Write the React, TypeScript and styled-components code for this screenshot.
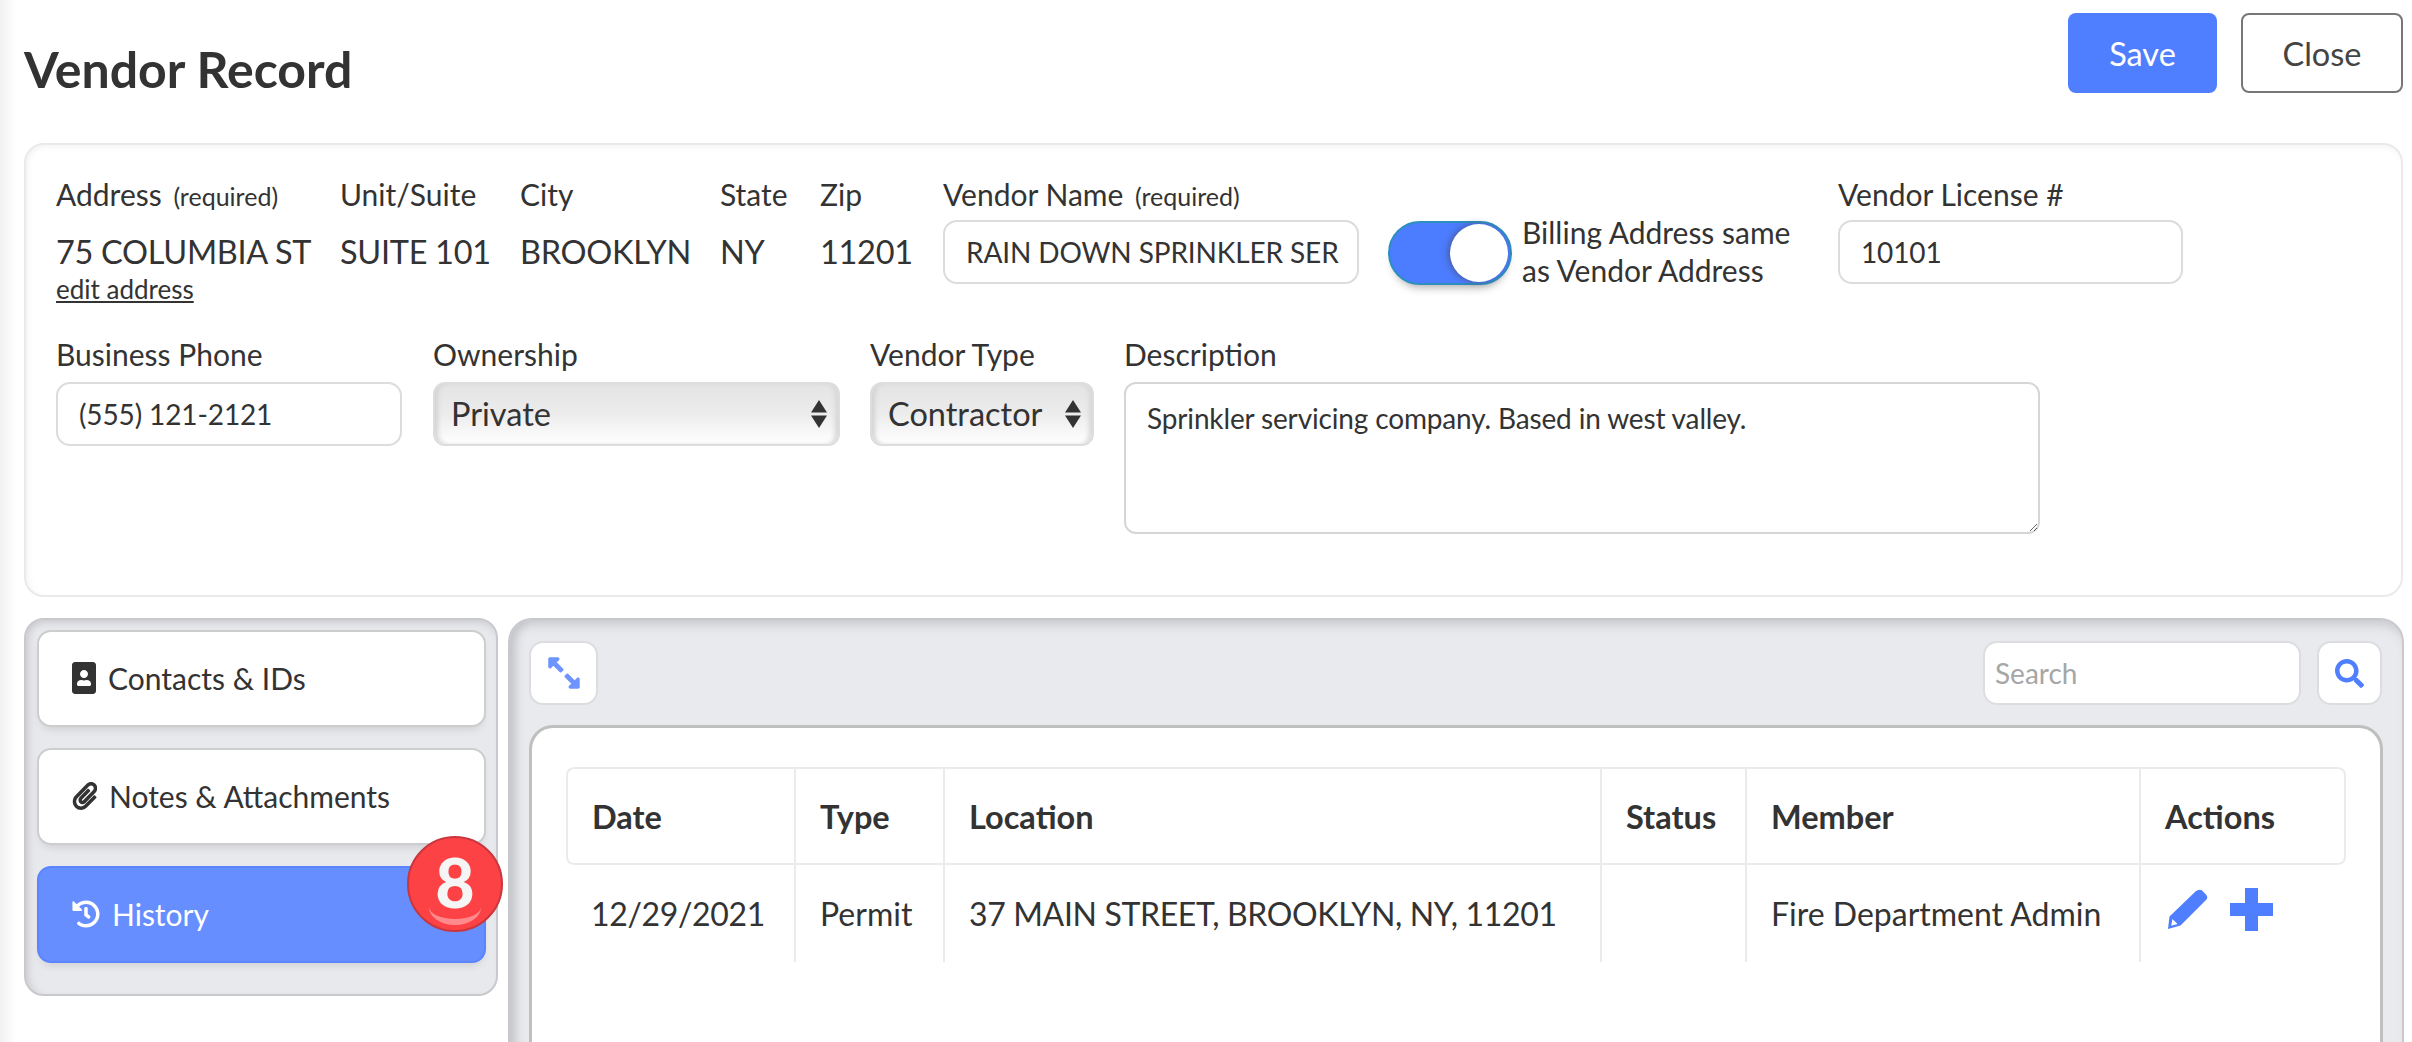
import React from "react";
import styled, { createGlobalStyle } from "styled-components";
import { FaPortrait, FaPaperclip, FaHistory, FaExpandAlt, FaSearch } from "react-icons/fa";

const Global = createGlobalStyle`
  html, body { margin: 0; padding: 0; background: #fff; }
  body { font-family: Lato, "Open Sans", sans-serif; color: #333; }
  * { box-sizing: border-box; }
`;

const Page = styled.div`
  width: 2412px;
  height: 1042px;
  overflow: hidden;
  padding-left: 24px;
  display: flex;
  flex-direction: column;
  box-shadow: inset 16px 0 12px -8px #f1f1f1;
`;

const Header = styled.header`
  height: 143px;
  flex: none;
  display: flex;
  justify-content: space-between;
  align-items: flex-start;
  padding-right: 9px;
`;

const Title = styled.h1`
  margin: 44px 0 0;
  font-size: 50px;
  line-height: 50px;
  font-weight: 700;
  color: #333;
`;

const Actions = styled.div`
  display: flex;
  gap: 24px;
  padding-top: 13px;
`;

const HeadButton = styled.button<{ $primary?: boolean }>`
  height: 80px;
  width: ${(p) => (p.$primary ? "149px" : "162px")};
  border-radius: 8px;
  font: 400 32.5px Lato, sans-serif;
  color: ${(p) => (p.$primary ? "#fff" : "#444")};
  background: ${(p) => (p.$primary ? "#4f7fff" : "#fff")};
  border: ${(p) => (p.$primary ? "none" : "2px solid #777")};
`;

const Card = styled.section`
  margin-right: 9px;
  flex: none;
  height: 454px;
  border: 2px solid #eaeaea;
  border-radius: 20px;
  padding: 31px 30px 0;
  box-shadow: inset 0 6px 8px -6px #eee, inset 6px 0 8px -6px #eee;
  display: flex;
  flex-direction: column;
  gap: 33px;
`;

const Row = styled.div`
  display: flex;
  align-items: flex-start;
  height: 127px;
`;

const Row2 = styled(Row)`
  height: 197px;
`;

const Field = styled.div<{ $w: number }>`
  flex: none;
  width: ${(p) => p.$w}px;
  display: flex;
  flex-direction: column;
`;

const Label = styled.div<{ $gap?: number }>`
  font-size: 30px;
  line-height: 36px;
  height: 36px;
  margin-bottom: ${(p) => p.$gap ?? 8}px;
  white-space: nowrap;
  color: #333;
`;

const Req = styled.span`
  font-size: 25px;
  margin-left: 4px;
`;

const Value = styled.div`
  font-size: 32.5px;
  height: 64px;
  line-height: 64px;
  white-space: nowrap;
  letter-spacing: -0.3px;
`;

const EditLink = styled.a`
  font-size: 26px;
  line-height: 28px;
  margin-top: -9px;
  text-decoration: underline;
  color: #333;
  white-space: nowrap;
`;

const TextInput = styled.input<{ $w?: number }>`
  width: ${(p) => (p.$w ? `${p.$w}px` : "100%")};
  height: 64px;
  border: 2px solid #dcdcdc;
  border-radius: 14px;
  padding: 0 10px 0 21px;
  font: 400 28px Lato, sans-serif;
  letter-spacing: -0.12px;
  color: #333;
  background: #fff;
  outline: none;
`;

const SelectWrap = styled.div<{ $w: number }>`
  position: relative;
  width: ${(p) => p.$w}px;
  height: 64px;
`;

const Select = styled.select`
  appearance: none;
  width: 100%;
  height: 64px;
  border: 2px solid #dddddd;
  border-radius: 12px;
  padding: 0 16px 2px;
  font: 400 32.5px Lato, sans-serif;
  color: #333;
  background: linear-gradient(#e4e4e4, #ececec 50%, #fff);
  box-shadow: inset 5px 0 5px -2px #d2d2d2, inset -5px 0 5px -2px #d6d6d6;
  outline: none;
`;

const Arrows = styled.svg`
  position: absolute;
  right: 13px;
  top: 18px;
  width: 16px;
  height: 28px;
  pointer-events: none;
`;

const TextArea = styled.textarea`
  width: 100%;
  height: 152px;
  border: 2px solid #d6d6d6;
  border-radius: 12px;
  padding: 17px 21px;
  font: 400 28px Lato, sans-serif;
  letter-spacing: -0.15px;
  color: #333;
  background: #fff;
  outline: none;
  display: block;
`;

const ToggleBox = styled.div`
  flex: none;
  width: 124px;
  height: 64px;
  margin-top: 45px;
  position: relative;
  border-radius: 32px;
  background: #4c7cff;
  border: 2px solid #2d8fbf;
  box-shadow: 0 8px 10px -6px rgba(0, 0, 0, 0.35);
`;

const Knob = styled.span`
  position: absolute;
  right: 2px;
  top: 1px;
  width: 58px;
  height: 58px;
  border-radius: 50%;
  background: #fff;
  box-shadow: -2px 0 6px rgba(70, 70, 90, 0.6);
`;

const ToggleText = styled.div`
  flex: none;
  width: 316px;
  margin: 37px 0 0 10px;
  padding-right: 46px;
  font-size: 30px;
  line-height: 38px;
  color: #333;
`;

const Lower = styled.div`
  flex: 1;
  min-height: 0;
  margin-top: 21px;
  padding-right: 9px;
  display: flex;
  align-items: flex-start;
  gap: 10px;
`;

const SidePanel = styled.nav`
  flex: none;
  width: 474px;
  height: 378px;
  background: #e8e9ed;
  border: 2px solid #c8c9cc;
  border-radius: 20px;
  padding: 10px 10px 0 11px;
  box-shadow: inset 0 8px 8px -6px #c8c9cc, inset 8px 0 8px -6px #c8c9cc;
  display: flex;
  flex-direction: column;
  gap: 21px;
`;

const Tab = styled.div<{ $active?: boolean }>`
  position: relative;
  height: 97px;
  border-radius: 14px;
  display: flex;
  align-items: center;
  padding: 0 0 2px 33px;
  gap: 12px;
  font-size: 30px;
  background: ${(p) => (p.$active ? "#668eff" : "#fff")};
  color: ${(p) => (p.$active ? "#fff" : "#333")};
  border: 2px solid ${(p) => (p.$active ? "#5a85ff" : "#cdcdcd")};
  box-shadow: 0 6px 8px -4px rgba(0, 0, 0, 0.12);
`;

const IconSlot = styled.span<{ $w: number }>`
  flex: none;
  width: ${(p) => p.$w}px;
  display: flex;
  justify-content: center;
  overflow: hidden;
  svg { flex: none; }
`;

const Badge = styled.span`
  position: absolute;
  right: -19px;
  top: -32px;
  width: 96px;
  height: 96px;
  border-radius: 50%;
  background: #fc4244;
  border: 2px solid #c8363e;
  color: #f5f5f5;
  font-size: 68px;
  font-weight: 900;
  padding-bottom: 6px;
  display: flex;
  align-items: center;
  justify-content: center;
  overflow: hidden;
  &::after {
    content: "";
    position: absolute;
    left: 20px;
    right: 20px;
    bottom: 5px;
    height: 30px;
    border-radius: 50%;
    border-bottom: 6px solid #ff8a8d;
  }
`;

const MainPanel = styled.main`
  flex: 1;
  height: 100%;
  background: #e9eaee;
  border: 2px solid #c8c9cc;
  border-bottom: none;
  border-radius: 24px 24px 0 0;
  box-shadow: inset 0 12px 12px -8px #c4c5c9, inset 14px 0 10px -8px #c4c5c9;
  display: flex;
  flex-direction: column;
  padding: 0 19px 0 19px;
`;

const Toolbar = styled.div`
  height: 105px;
  flex: none;
  display: flex;
  align-items: flex-start;
  padding: 21px 1px 0 0;
  gap: 16px;
`;

const IconButton = styled.button<{ $w: number }>`
  width: ${(p) => p.$w}px;
  height: 64px;
  flex: none;
  border: 2px solid #dcdde0;
  border-radius: 14px;
  background: #fff;
  display: flex;
  align-items: center;
  justify-content: center;
  padding: 0;
  color: #4f7fff;
`;

const ExpandIcon = styled(FaExpandAlt)`
  transform: scaleX(-1);
  color: #6e95ff;
`;

const SearchInput = styled.input`
  width: 318px;
  height: 64px;
  margin-left: auto;
  border: 2px solid #dcdde0;
  border-radius: 14px;
  padding: 0 10px;
  font: 400 28px Lato, sans-serif;
  background: #fff;
  outline: none;
  &::placeholder { color: #a6a6a6; opacity: 1; }
`;

const Inner = styled.div`
  flex: 1;
  background: #fff;
  border: 3px solid #bfbfbf;
  border-bottom: none;
  border-radius: 24px 24px 0 0;
  padding: 39px 34px 0 34px;
`;

const Table = styled.table`
  width: 1780px;
  table-layout: fixed;
  border-collapse: separate;
  border-spacing: 0;
`;

const Th = styled.th`
  height: 98px;
  padding: 0 0 0 24px;
  text-align: left;
  font-size: 32.5px;
  font-weight: 700;
  color: #333;
  border-top: 2px solid #ebebeb;
  border-bottom: 2px solid #ebebeb;
  border-left: 2px solid #ebebeb;
  &:first-child { border-top-left-radius: 8px; border-bottom-left-radius: 8px; }
  &:last-child { border-right: 2px solid #ebebeb; border-top-right-radius: 8px; border-bottom-right-radius: 8px; }
`;

const Td = styled.td<{ $tight?: boolean }>`
  height: 97px;
  padding: 0 0 0 24px;
  font-size: 32px;
  letter-spacing: ${(p) => (p.$tight ? "-0.35px" : "0")};
  color: #333;
  white-space: nowrap;
  border-left: 2px solid #ebebeb;
  &:first-child { border-left: none; padding-left: 25px; }
`;

const ActionIcons = styled.div`
  display: flex;
  align-items: center;
  gap: 22px;
  color: #4f7fff;
  margin: -8px 0 0 3px;
`;

const Columns = [228, 149, 657, 145, 394, 207];

const SelectArrows = () => (
  <Arrows viewBox="0 0 16 28"><path d="M8 0l8 12.5H0zM8 28L0 15.5h16z" fill="#333" /></Arrows>
);

export default function App() {
  return (
    <Page>
      <Global />
      <Header>
        <Title>Vendor Record</Title>
        <Actions>
          <HeadButton $primary>Save</HeadButton>
          <HeadButton>Close</HeadButton>
        </Actions>
      </Header>

      <Card>
        <Row>
          <Field $w={284}>
            <Label>Address <Req>(required)</Req></Label>
            <Value>75 COLUMBIA ST</Value>
            <EditLink>edit address</EditLink>
          </Field>
          <Field $w={180}>
            <Label>Unit/Suite</Label>
            <Value>SUITE 101</Value>
          </Field>
          <Field $w={200}>
            <Label>City</Label>
            <Value>BROOKLYN</Value>
          </Field>
          <Field $w={100}>
            <Label>State</Label>
            <Value>NY</Value>
          </Field>
          <Field $w={123}>
            <Label>Zip</Label>
            <Value>11201</Value>
          </Field>
          <Field $w={445}>
            <Label>Vendor Name <Req>(required)</Req></Label>
            <TextInput $w={416} readOnly value="RAIN DOWN SPRINKLER SER" />
          </Field>
          <ToggleBox><Knob /></ToggleBox>
          <ToggleText>Billing Address same as Vendor Address</ToggleText>
          <Field $w={345}>
            <Label>Vendor License #</Label>
            <TextInput readOnly value="10101" />
          </Field>
        </Row>
        <Row2>
          <Field $w={377}>
            <Label $gap={10}>Business Phone</Label>
            <TextInput $w={346} readOnly value="(555) 121-2121" />
          </Field>
          <Field $w={437}>
            <Label $gap={10}>Ownership</Label>
            <SelectWrap $w={407}>
              <Select defaultValue="Private"><option>Private</option></Select>
              <SelectArrows />
            </SelectWrap>
          </Field>
          <Field $w={254}>
            <Label $gap={10}>Vendor Type</Label>
            <SelectWrap $w={224}>
              <Select defaultValue="Contractor"><option>Contractor</option></Select>
              <SelectArrows />
            </SelectWrap>
          </Field>
          <Field $w={916}>
            <Label $gap={10}>Description</Label>
            <TextArea readOnly value="Sprinkler servicing company. Based in west valley." />
          </Field>
        </Row2>
      </Card>

      <Lower>
        <SidePanel>
          <Tab><IconSlot $w={24}><FaPortrait size={32} /></IconSlot>Contacts &amp; IDs</Tab>
          <Tab><IconSlot $w={25}><FaPaperclip size={28} /></IconSlot>Notes &amp; Attachments</Tab>
          <Tab $active>
            <IconSlot $w={28}><FaHistory size={28} /></IconSlot>History
            <Badge>8</Badge>
          </Tab>
        </SidePanel>
        <MainPanel>
          <Toolbar>
            <IconButton $w={69}><ExpandIcon size={36} /></IconButton>
            <SearchInput placeholder="Search" />
            <IconButton $w={65}><FaSearch size={29} /></IconButton>
          </Toolbar>
          <Inner>
            <Table>
              <colgroup>{Columns.map((w, i) => <col key={i} width={w} />)}</colgroup>
              <thead>
                <tr>
                  <Th>Date</Th><Th>Type</Th><Th>Location</Th><Th>Status</Th><Th>Member</Th><Th>Actions</Th>
                </tr>
              </thead>
              <tbody>
                <tr>
                  <Td $tight>12/29/2021</Td>
                  <Td>Permit</Td>
                  <Td $tight>37 MAIN STREET, BROOKLYN, NY, 11201</Td>
                  <Td></Td>
                  <Td>Fire Department Admin</Td>
                  <Td>
                    <ActionIcons>
                      <svg width="40" height="41" viewBox="0 0 40 41">
                        <path
                          fillRule="evenodd"
                          fill="currentColor"
                          d="M27.5 2.5Q31-.5 34 1.5L38 5.5Q40.5 8.5 38 11L12.5 36.5 0 40 1.5 27.5ZM4.5 30 3.2 36.8 9.5 35Z"
                        />
                      </svg>
                      <svg width="43" height="43" viewBox="0 0 43 43"><path d="M15 0h13v15h15v13H28v15H15V28H0V15h15z" fill="currentColor" /></svg>
                    </ActionIcons>
                  </Td>
                </tr>
              </tbody>
            </Table>
          </Inner>
        </MainPanel>
      </Lower>
    </Page>
  );
}
